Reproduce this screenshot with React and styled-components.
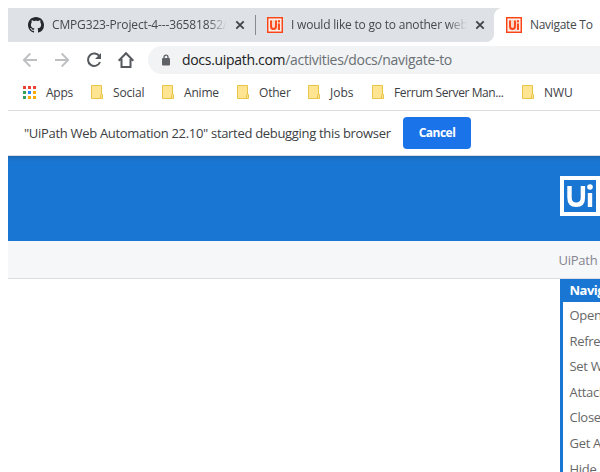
import React from 'react';
import styled, { createGlobalStyle, css } from 'styled-components';

const Global = createGlobalStyle`
  * { box-sizing: border-box; }
  html, body { margin: 0; background: #fff; overflow: hidden; }
  body { font-family: "Open Sans", "Noto Sans", sans-serif; font-size: 12px; color: #3c4043; }
  svg { display: block; flex: none; }
`;

const Browser = styled.div`
  width: 592px;
  height: 464px;
  margin: 8px 0 0 8px;
  overflow: hidden;
  display: flex;
  flex-direction: column;
`;

const Label = styled.span`
  display: block;
  flex: none;
  width: ${(p) => p.$w}px;
  white-space: pre;
  letter-spacing: ${(p) => p.$ls || 0}px;
`;

const TabStrip = styled.div`
  flex: none;
  height: 34px;
  display: flex;
  background: #fff;
`;

const Tab = styled.div`
  flex: none;
  display: flex;
  align-items: center;
  height: 34px;
  width: ${(p) => p.$width}px;
  padding-left: ${(p) => p.$pad}px;
  background: #dee1e6;
  border-bottom-right-radius: ${(p) => (p.$last ? 8 : 0)}px;
`;

const ActiveTab = styled(Tab)`
  background: radial-gradient(circle at 8px 8px, #fff 7.5px, #dee1e6 8.2px) 0 0 / 8px 8px no-repeat, #fff;
`;

const TabTitle = styled(Label)`
  margin-left: 8px;
  height: 18px;
  line-height: 17px;
  overflow: hidden;
  color: #45494d;
  ${(p) => p.$fade && css`mask-image: linear-gradient(90deg, #000 ${p.$w - 20}px, transparent);`}
`;

const CloseIcon = styled.svg`
  margin-left: 8px;
`;

const Separator = styled.i`
  width: 1px;
  height: 20px;
  margin-left: 10px;
  background: #868b90;
`;

const Toolbar = styled.div`
  flex: none;
  height: 34px;
  display: flex;
  align-items: center;
  gap: 16px;
  padding: 2px 0 0 14px;
`;

const Omnibox = styled.div`
  flex: 1;
  height: 28px;
  margin-left: -2px;
  padding-left: 14px;
  display: flex;
  align-items: center;
  gap: 12px;
  border-radius: 14px 0 0 14px;
  background: #f1f3f4;
`;

const Address = styled(Label)`
  font-size: 14px;
  line-height: 24px;
  padding-bottom: 1px;
  color: #6a6f74;
  b { font-weight: 400; color: #202124; }
`;

const Bookmarks = styled.div`
  flex: none;
  height: 35px;
  display: flex;
  align-items: center;
  padding: 0 0 2px 15px;
  border-bottom: 1px solid #dadce0;
`;

const Bookmark = styled.div`
  display: flex;
  flex: none;
  align-items: center;
  gap: 10px;
  margin-right: 18px;
`;

const InfoBar = styled.div`
  flex: none;
  height: 45px;
  padding-left: 16px;
  display: flex;
  align-items: center;
  gap: 12px;
  border-bottom: 1px solid #dce0e2;
`;

const Message = styled(Label)`
  font-size: 13px;
  line-height: 18px;
`;

const CancelButton = styled.button`
  width: 68px;
  height: 32px;
  padding: 0 0 1px;
  display: flex;
  align-items: center;
  justify-content: center;
  border: 0;
  border-radius: 4px;
  background: #1a73e8;
  color: #fff;
  font: 700 12px/18px "Open Sans", sans-serif;
  letter-spacing: -0.5px;
`;

const Banner = styled.header`
  flex: none;
  height: 85px;
  padding: 20px 0 0 552px;
  background: linear-gradient(#1863ad 0, #1a70c5 2px, #1976d2 6px);
`;

const Breadcrumb = styled.div`
  flex: none;
  height: 38px;
  padding: 10px 0 0 550.5px;
  border-bottom: 1px solid #d9dce0;
  background: #f5f7f9;
  color: #85858f;
`;

const Crumb = styled(Label)`
  font-size: 13px;
  line-height: 18px;
`;

const Sidebar = styled.nav`
  flex: 1;
  margin-left: 552px;
  border-left: 3px solid #1976d2;
`;

const NavItem = styled.div`
  height: ${(p) => (p.$active ? 23 : 25.6)}px;
  padding-left: 6.5px;
  overflow: hidden;
  white-space: nowrap;
  font-size: 13px;
  line-height: ${(p) => (p.$active ? 23 : 27)}px;
  letter-spacing: ${(p) => (p.$active ? -0.5 : -0.3)}px;
  color: ${(p) => (p.$active ? '#fff' : '#676767')};
  background: ${(p) => (p.$active ? '#1976d2' : '#fff')};
  font-weight: ${(p) => (p.$active ? 700 : 400)};
`;

const Github = () => (
  <svg width="16" height="16" viewBox="0 0 16 16" fill="#24292e">
    <path d="M8 0C3.58 0 0 3.58 0 8c0 3.54 2.29 6.53 5.47 7.59.4.07.55-.17.55-.38 0-.19-.01-.82-.01-1.49-2.01.37-2.53-.49-2.69-.94-.09-.23-.48-.94-.82-1.13-.28-.15-.68-.52-.01-.53.63-.01 1.08.58 1.23.82.72 1.21 1.87.87 2.33.66.07-.52.28-.87.51-1.07-1.78-.2-3.64-.89-3.64-3.95 0-.87.31-1.59.82-2.15-.08-.2-.36-1.02.08-2.12 0 0 .67-.21 2.2.82.64-.18 1.32-.27 2-.27s1.36.09 2 .27c1.53-1.04 2.2-.82 2.2-.82.44 1.1.16 1.92.08 2.12.51.56.82 1.27.82 2.15 0 3.07-1.87 3.75-3.65 3.95.29.25.54.73.54 1.48 0 1.07-.01 1.93-.01 2.2 0 .21.15.46.55.38A8.01 8.01 0 0 0 16 8c0-4.42-3.58-8-8-8z" />
  </svg>
);

const UiMark = ({ size, fg, bg, frame }) => (
  <svg width={size} height={size} viewBox="0 0 40 40">
    <path fill={frame} d="M0 0h40v40H0z" />
    <path fill={bg} d="M4 4h32v32H4z" />
    <path d="M9.500 10v11.500q0 7.300 6.700 7.300t6.700-7.300V10M30 17v14" fill="none" stroke={fg} strokeWidth="4.400" />
    <circle cx="30" cy="11" r="2.800" fill={fg} />
  </svg>
);

const Favicon = () => (
  <svg width="16" height="16" viewBox="0 0 16 16">
    <path fill="#fa4616" d="M0 0h16v16H0z" />
    <path fill="#fff" d="M1.500 1.500h13v13h-13z" />
    <path fill="#fbd8cc" d="M2.500 2.500h11v11h-11z" />
    <path d="M4 3.500V9q0 3 2.500 3T9 9V3.500M12 6.500V13" fill="none" stroke="#fa4616" strokeWidth="1.900" />
    <path fill="#fa4616" d="M11 3.300h2v2h-2z" />
  </svg>
);

const Close = () => (
  <CloseIcon width="10" height="10" viewBox="0 0 10 10">
    <path d="M1.300 1.300l7.400 7.400M8.700 1.300L1.300 8.700" stroke="#3f4348" strokeWidth="1.800" />
  </CloseIcon>
);

const Back = () => (
  <svg width="16" height="16" viewBox="0 0 16 16" fill="none" stroke="#bdbfc1" strokeWidth="1.800">
    <path d="M15 8H2M8.300 1.500L1.800 8l6.500 6.500" />
  </svg>
);
const Forward = () => (
  <svg width="16" height="16" viewBox="0 0 16 16" fill="none" stroke="#bdbfc1" strokeWidth="1.800">
    <path d="M1 8h13M7.700 1.500L14.200 8l-6.500 6.500" />
  </svg>
);
const Reload = () => (
  <svg width="16" height="16" viewBox="0 0 16 16">
    <path d="M13.500 4.500A6.200 6.200 0 1 0 14 10" fill="none" stroke="#55595e" strokeWidth="2" />
    <path d="M15 1v6H9z" fill="#55595e" />
  </svg>
);
const Home = () => (
  <svg width="16" height="18" viewBox="1 0 16 18" fill="none" stroke="#55595e" strokeWidth="2">
    <path d="M1.600 9.700L9 2.200l7.400 7.500M4.500 8v8h9V8" />
  </svg>
);
const Lock = () => (
  <svg width="8" height="12" viewBox="0 0 8 12">
    <path d="M2 5V3.200a2 2 0 0 1 4 0V5" fill="none" stroke="#5f6368" strokeWidth="1.300" />
    <rect y="4" width="8" height="7.500" rx="1" fill="#5f6368" />
  </svg>
);
const colors = ['#ea4335', '#ea4335', '#ea4335', '#34a05a', '#2787f5', '#f9ab00', '#34a05a', '#f9ab00', '#f9ab00'];
const Grid = () => (
  <svg width="13" height="13" viewBox="0 0 13 13">
    {colors.map((c, i) => (
      <rect key={i} x={(i % 3) * 5} y={Math.floor(i / 3) * 5} width="3" height="3" fill={c} />
    ))}
  </svg>
);
const Folder = () => (
  <svg width="12" height="14" viewBox="0 0 12 14" fill="#ffe591" stroke="#e8c44a">
    <path d="M.5.500h10v9h1v4H.5z" />
    <path d="M9.500 13V10.500q0-1 1-1t1 1v2.500" />
  </svg>
);

const folders = [
  ['Social', 31, -0.15, 18],
  ['Anime', 34, -0.2, 19],
  ['Other', 31, -0.2, 18],
  ['Jobs', 24, 0, 18],
  ['Ferrum Server Man...', 110, -0.4, 18],
  ['NWU', 30, 0, 0],
];

const FolderLink = styled(Bookmark)`
  margin-right: ${(p) => p.$gap}px;
`;

const pages = ['Open Browser', 'Refresh Browser', 'Set Web Attribute', 'Attach Browser', 'Close Tab', 'Get Attribute', 'Hide Element'];

export default function App() {
  return (
    <>
      <Global />
      <Browser>
        <TabStrip>
          <Tab $width={248} $pad={20}>
            <Github />
            <TabTitle $w={175} $ls={-0.15} $fade>CMPG323-Project-4---36581852/</TabTitle>
            <Close />
            <Separator />
          </Tab>
          <Tab $width={238} $pad={11} $last>
            <Favicon />
            <TabTitle $w={176} $ls={-0.2} $fade>I would like to go to another web</TabTitle>
            <Close />
          </Tab>
          <ActiveTab $width={106} $pad={12}>
            <Favicon />
            <TabTitle $w={70} $ls={-0.3}>Navigate To</TabTitle>
          </ActiveTab>
        </TabStrip>
        <Toolbar>
          <Back />
          <Forward />
          <Reload />
          <Home />
          <Omnibox>
            <Lock />
            <Address $w={280} $ls={-0.31}><b>docs.uipath.com</b>/activities/docs/navigate-to</Address>
          </Omnibox>
        </Toolbar>
        <Bookmarks>
          <Bookmark><Grid /><Label $w={27} $ls={-0.25}>Apps</Label></Bookmark>
          {folders.map(([name, w, ls, gap]) => (
            <FolderLink key={name} $gap={gap}><Folder /><Label $w={w} $ls={ls}>{name}</Label></FolderLink>
          ))}
        </Bookmarks>
        <InfoBar>
          <Message $w={367} $ls={-0.31}>"UiPath Web Automation 22.10" started debugging this browser</Message>
          <CancelButton>Cancel</CancelButton>
        </InfoBar>
        <Banner><UiMark size={40} fg="#fff" bg="#1976d2" frame="#fff" /></Banner>
        <Breadcrumb><Crumb $w={90} $ls={-0.25}>UiPath Activities</Crumb></Breadcrumb>
        <Sidebar>
          <NavItem $active>Navigate To</NavItem>
          {pages.map((name) => <NavItem key={name}>{name}</NavItem>)}
        </Sidebar>
      </Browser>
    </>
  );
}
